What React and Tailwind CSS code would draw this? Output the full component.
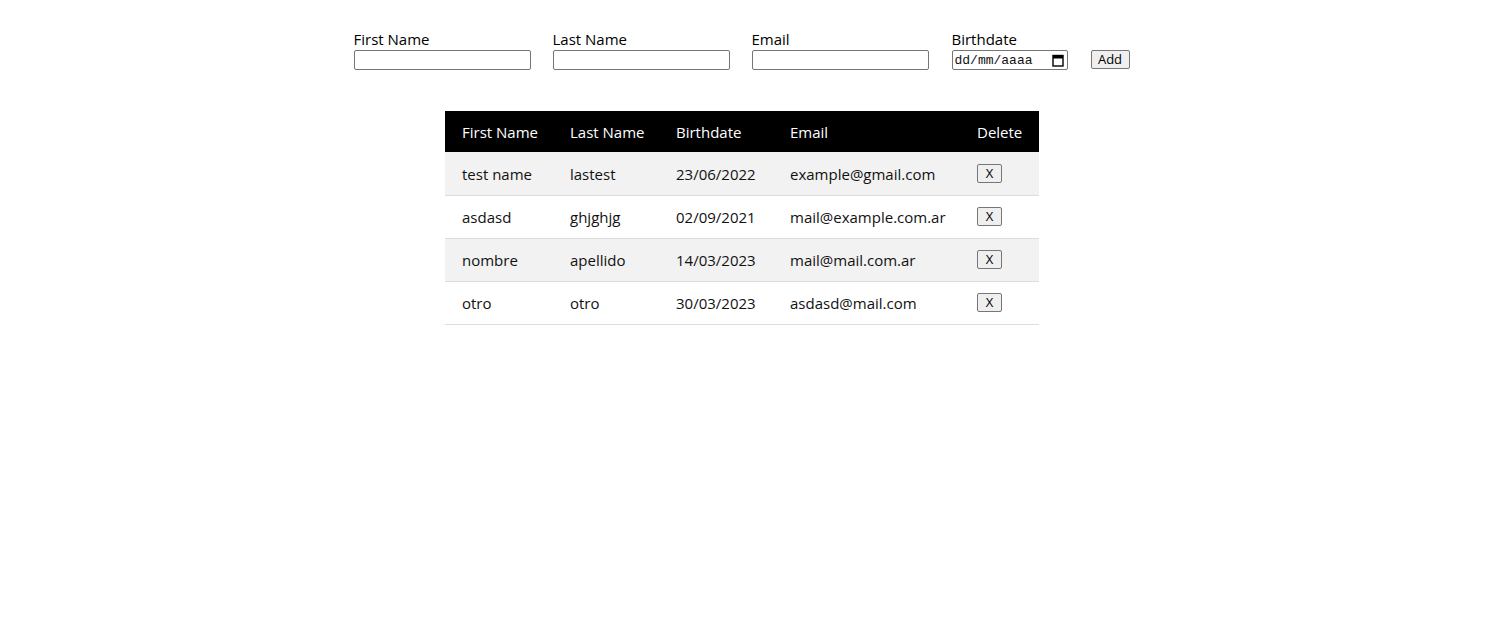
import React from 'react';

const rows = [
  { first: 'test name', last: 'lastest', birth: '23/06/2022', email: 'example@gmail.com' },
  { first: 'asdasd', last: 'ghjghjg', birth: '02/09/2021', email: 'mail@example.com.ar' },
  { first: 'nombre', last: 'apellido', birth: '14/03/2023', email: 'mail@mail.com.ar' },
  { first: 'otro', last: 'otro', birth: '30/03/2023', email: 'asdasd@mail.com' },
];

const font = { fontFamily: '"Open Sans", "Noto Sans", sans-serif' };

function Field({ label, children, className = '' }) {
  return (
    <label className={`flex flex-col text-[15px] leading-[21px] text-black ${className}`}>
      {label}
      {children}
    </label>
  );
}

function TextInput() {
  return (
    <input
      type="text"
      className="w-[177px] h-[20px] border border-[#767676] rounded-[2px] bg-white px-[2px] text-[13px] outline-none"
    />
  );
}

function FakeDate() {
  // chrome date input, rendered by hand so the placeholder stays "dd/mm/aaaa"
  return (
    <div className="w-[116px] h-[20px] border border-[#767676] rounded-[2px] bg-white flex items-center pl-[2px] pr-[3px]">
      <span className="text-[13px] leading-none text-[#111] font-['Liberation_Mono',monospace] flex-1">dd/mm/aaaa</span>
      <svg width="12" height="13" viewBox="0 0 12 13" className="shrink-0">
        <rect x="1" y="1.5" width="10" height="10.5" fill="none" stroke="#000" strokeWidth="1.4" />
        <rect x="1" y="1.5" width="10" height="3" fill="#000" />
      </svg>
    </div>
  );
}

function Btn({ children, className = '' }) {
  return (
    <button
      className={`h-[19px] border border-[#767676] rounded-[2px] bg-[#efefef] text-[13px] leading-none text-black flex items-center justify-center ${className}`}
    >
      {children}
    </button>
  );
}

const cell = 'h-[43px] pl-[16px] pr-[15px] pt-[1px] pb-0 whitespace-nowrap';

export default function App() {
  return (
    <div className="min-h-screen bg-white" style={font}>
      <div className="flex justify-center pt-[29px] pr-[11px]">
        <div className="flex items-end gap-[22px]">
          <Field label="First Name"><TextInput /></Field>
          <Field label="Last Name"><TextInput /></Field>
          <Field label="Email"><TextInput /></Field>
          <Field label="Birthdate" className="ml-[1px]"><FakeDate /></Field>
          <Btn className="w-[39px] ml-[1px] mb-[1px]">Add</Btn>
        </div>
      </div>

      <div className="flex justify-center mt-[41px] pr-[10px]">
        <table className="table-fixed border-collapse w-[594px] text-[15px] text-[#111]">
          <colgroup>
            <col className="w-[109px]" />
            <col className="w-[106px]" />
            <col className="w-[114px]" />
            <col className="w-[187px]" />
            <col className="w-[78px]" />
          </colgroup>
          <thead>
            <tr className="bg-black text-white">
              {['First Name', 'Last Name', 'Birthdate', 'Email', 'Delete'].map((h, i) => (
                <th
                  key={h}
                  className={`h-[41px] ${i === 0 ? 'pl-[17px]' : 'pl-[16px]'} pr-[15px] pt-[1px] pb-0 text-left font-normal whitespace-nowrap`}
                >
                  {h}
                </th>
              ))}
            </tr>
          </thead>
          <tbody>
            {rows.map((r, i) => (
              <tr key={i} className={`border-b border-[#dddddd] ${i % 2 === 0 ? 'bg-[#f2f2f2]' : 'bg-white'}`}>
                <td className={`${cell} !pl-[17px]`}>{r.first}</td>
                <td className={cell}>{r.last}</td>
                <td className={cell}>{r.birth}</td>
                <td className={cell}>{r.email}</td>
                <td className="h-[43px] pl-[16px] pr-[15px] py-0">
                  <Btn className="w-[25px]">X</Btn>
                </td>
              </tr>
            ))}
          </tbody>
        </table>
      </div>
    </div>
  );
}
